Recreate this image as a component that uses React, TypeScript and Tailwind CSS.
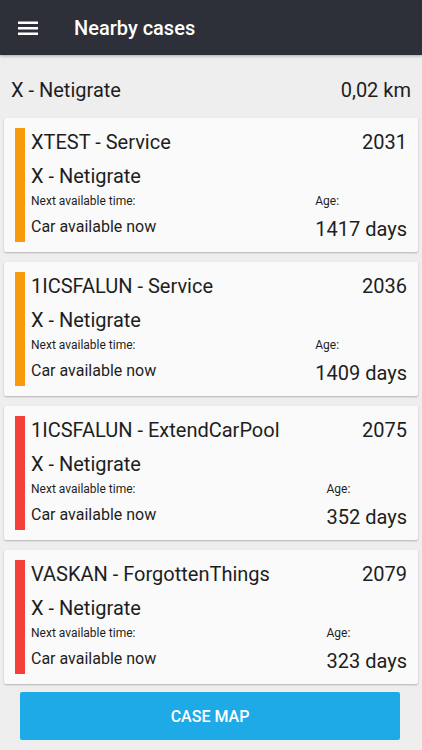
const cases = [
  { title: "XTEST - Service", id: "2031", age: "1417 days", color: "bg-[#f89a10]" },
  { title: "1ICSFALUN - Service", id: "2036", age: "1409 days", color: "bg-[#f89a10]" },
  { title: "1ICSFALUN - ExtendCarPool", id: "2075", age: "352 days", color: "bg-[#f4403a]" },
  { title: "VASKAN - ForgottenThings", id: "2079", age: "323 days", color: "bg-[#f4403a]" },
];

function CaseCard({ title, id, age, color }: (typeof cases)[number]) {
  return (
    <div className="flex gap-[6px] rounded-[2px] bg-[#fafafa] py-[10px] pl-[11px] pr-[11px] shadow-[0_1px_2px_rgba(0,0,0,0.25)]">
      <span className={`w-[10px] shrink-0 ${color}`} />
      <div className="flex min-w-0 flex-1 flex-col">
        <div className="flex items-center justify-between text-[20px] leading-[28px]">
          <span>{title}</span>
          <span>{id}</span>
        </div>
        <div className="mt-[6px] text-[20px] leading-[28px]">X - Netigrate</div>
        <div className="mt-[3px] flex items-start justify-between">
          <div className="flex flex-col">
            <span className="text-[12px] leading-[16px]">Next available time:</span>
            <span className="mt-[7px] text-[16px] leading-[22px]">Car available now</span>
          </div>
          <div className="flex flex-col">
            <span className="text-[12px] leading-[16px]">Age:</span>
            <span className="mt-[7px] text-[20px] leading-[26px]">{age}</span>
          </div>
        </div>
      </div>
    </div>
  );
}

export default function App() {
  return (
    <div className="flex h-[750px] w-[422px] flex-col overflow-hidden bg-[#eeeeee] font-['Roboto',sans-serif] text-[#1e1e1e]">
      <header className="flex h-[55px] shrink-0 items-center bg-[#2d3039] pl-[18px] shadow-[0_1px_3px_rgba(0,0,0,0.3)]">
        <svg width="20" height="16" viewBox="0 0 20 16" aria-hidden="true">
          <rect x="0" y="1.5" width="20" height="2.5" fill="#ffffff" />
          <rect x="0" y="7" width="20" height="2.5" fill="#ffffff" />
          <rect x="0" y="12.5" width="20" height="2.5" fill="#ffffff" />
        </svg>
        <h1 className="ml-[36px] text-[20px] font-medium text-white">Nearby cases</h1>
      </header>

      <div className="flex shrink-0 items-center justify-between px-[11px] pt-[24px] pb-[17px] text-[20px] leading-[22px]">
        <span>X - Netigrate</span>
        <span>0,02 km</span>
      </div>

      <div className="flex flex-col gap-[10px] px-[4px]">
        {cases.map((c) => (
          <CaseCard key={c.id} {...c} />
        ))}
      </div>

      <div className="mt-[8px] pl-[20px] pr-[22px]">
        <button className="flex h-[48px] w-full items-center justify-center rounded-[2px] bg-[#1eaae7] pt-[2px] text-[16px] font-medium text-white">
          CASE MAP
        </button>
      </div>
    </div>
  );
}
